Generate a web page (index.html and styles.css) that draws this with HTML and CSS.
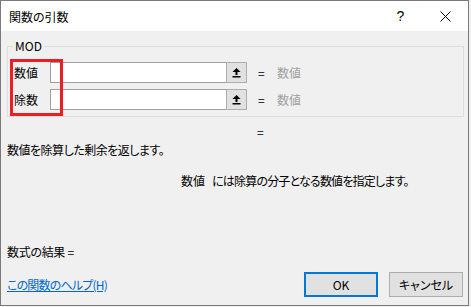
FILE: index.html
```html
<!DOCTYPE html>
<html lang="ja">
<head>
    <meta charset="UTF-8">
    <title>関数の引数</title>
    <link rel="stylesheet" href="styles.css">
</head>
<body>
    <div class="dialog">
        <!-- タイトルバー -->
        <div class="titlebar">
            <span class="title">関数の引数</span>
            <span class="title-btn">?</span>
            <span class="title-btn">
                <svg width="11" height="11" viewBox="0 0 11 11"><path d="M0.5 0.5 L10.5 10.5 M10.5 0.5 L0.5 10.5" stroke="#000" stroke-width="1" fill="none"/></svg>
            </span>
        </div>

        <div class="dialog-body">
            <fieldset class="args">
                <legend>MOD</legend>
                <div class="arg-rows">
                    <div class="arg-row">
                        <span class="arg-label">数値</span>
                        <input class="arg-input" type="text">
                        <button class="ref-btn">
                            <svg width="9" height="10" viewBox="0 0 9 10"><path d="M4.5 0 L8.5 4 L5.5 4 L5.5 7 L3.5 7 L3.5 4 L0.5 4 Z" fill="#000"/><rect x="0.5" y="8" width="8" height="1.5" fill="#000"/></svg>
                        </button>
                        <span class="eq">=</span>
                        <span class="arg-value">数値</span>
                    </div>
                    <div class="arg-row">
                        <span class="arg-label">除数</span>
                        <input class="arg-input" type="text">
                        <button class="ref-btn">
                            <svg width="9" height="10" viewBox="0 0 9 10"><path d="M4.5 0 L8.5 4 L5.5 4 L5.5 7 L3.5 7 L3.5 4 L0.5 4 Z" fill="#000"/><rect x="0.5" y="8" width="8" height="1.5" fill="#000"/></svg>
                        </button>
                        <span class="eq">=</span>
                        <span class="arg-value">数値</span>
                    </div>
                    <!-- 赤枠の注釈 -->
                    <div class="highlight"></div>
                </div>
            </fieldset>

            <div class="result-eq">=</div>
            <p class="func-desc">数値を除算した剰余を返します。</p>
            <p class="arg-desc"><span class="arg-name">数値</span>には除算の分子となる数値を指定します。</p>
            <p class="formula-result">数式の結果 =</p>

            <div class="footer">
                <a class="help-link" href="#">この関数のヘルプ(H)</a>
                <button class="btn btn-ok">OK</button>
                <button class="btn">キャンセル</button>
            </div>
        </div>
    </div>
</body>
</html>
```

FILE: styles.css
```css
* {
    margin: 0;
    padding: 0;
    box-sizing: border-box;
}

body {
    font-family: "Noto Sans CJK JP", "Noto Sans", sans-serif;
    font-size: 12px;
    font-feature-settings: "palt";
    color: #000;
    background-color: #f0f0f0;
}

.dialog {
    width: 469px;
    height: 306px;
    border: 1px solid #7a7a7a;
    background-color: #f0f0f0;
    display: flex;
    flex-direction: column;
}

/* タイトルバー */
.titlebar {
    height: 30px;
    background-color: #fff;
    display: flex;
    align-items: center;
    padding-left: 8px;
}

.title {
    flex: 1;
    font-size: 12px;
}

.title-btn {
    width: 45px;
    height: 30px;
    display: flex;
    align-items: center;
    justify-content: center;
    font-family: "Liberation Sans", sans-serif;
    font-size: 14px;
}

.dialog-body {
    flex: 1;
    display: flex;
    flex-direction: column;
}

/* 引数のグループ */
.args {
    margin: 8px 0 0 6px;
    width: 457px;
    border: 1px solid #dcdcdc;
    padding: 0 0 6px 0;
}

.args legend {
    margin-left: 5px;
    padding: 0 2px;
    line-height: 14px;
}

.arg-rows {
    position: relative;
    padding: 9px 0 0 6px;
    display: flex;
    flex-direction: column;
    gap: 6px;
}

.arg-row {
    display: flex;
    align-items: center;
    height: 21px;
}

.arg-label {
    width: 36px;
}

.arg-input {
    width: 176px;
    height: 21px;
    border: 1px solid #a0a0a0;
    border-right: none;
    background-color: #fff;
    outline: none;
}

.ref-btn {
    width: 21px;
    height: 21px;
    border: 1px solid #adadad;
    background-color: #e1e1e1;
    display: flex;
    align-items: center;
    justify-content: center;
}

.eq {
    margin-left: 11px;
    width: 19px;
}

.arg-value {
    color: #a0a0a0;
}

.highlight {
    position: absolute;
    left: 2px;
    top: 6px;
    width: 53px;
    height: 57px;
    border: 3px solid #ee1c24;
}

.result-eq {
    margin-top: 7px;
    padding-left: 256px;
    line-height: 16px;
}

.func-desc {
    margin-top: 2px;
    padding-left: 6px;
    line-height: 16px;
    letter-spacing: -0.5px;
}

.arg-desc {
    margin-top: 15px;
    padding-left: 180px;
    line-height: 16px;
    letter-spacing: -0.8px;
}

.arg-name {
    margin-right: 7px;
    letter-spacing: 0;
}

.formula-result {
    margin-top: 55px;
    padding-left: 6px;
    line-height: 16px;
    letter-spacing: -0.3px;
}

/* 下部のボタン */
.footer {
    margin-top: 12px;
    display: flex;
    align-items: center;
    gap: 11px;
    padding: 0 5px 0 6px;
}

.help-link {
    flex: 1;
    color: #0066cc;
    text-decoration: underline;
    letter-spacing: -0.8px;
}

.btn {
    width: 74px;
    height: 25px;
    font-family: inherit;
    font-size: 12px;
    font-feature-settings: "palt";
    background-color: #e1e1e1;
    border: 1px solid #adadad;
}

.btn-ok {
    border: 2px solid #0078d7;
}
```
